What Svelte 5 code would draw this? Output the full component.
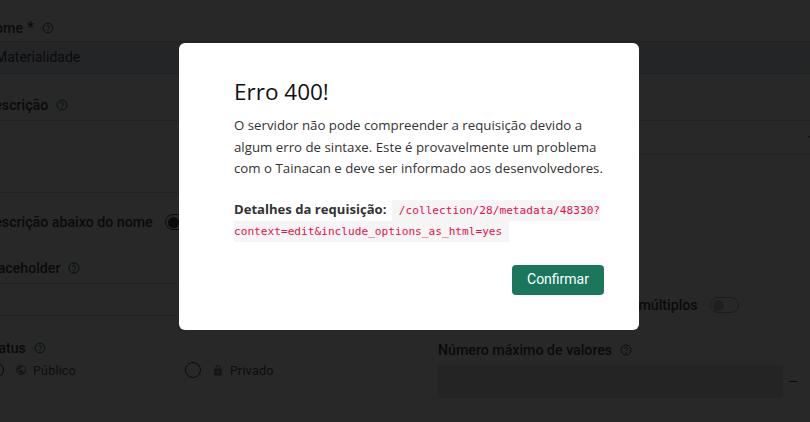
<script lang="ts">
	const statusOptions = [
		{ label: 'Público', icon: 'globe' },
		{ label: 'Privado', icon: 'lock' }
	];
</script>

{#snippet help()}
	<svg class="help" viewBox="0 0 24 24" width="12" height="12" aria-hidden="true">
		<circle cx="12" cy="12" r="10" fill="none" stroke="currentColor" stroke-width="2" />
		<path d="M9 9.500a3 3 0 1 1 4.600 2.500c-1 .7-1.600 1.300-1.600 2.500" fill="none" stroke="currentColor" stroke-width="2" />
		<circle cx="12" cy="17.500" r="1.300" fill="currentColor" />
	</svg>
{/snippet}

<div class="page">
	<form class="form">
		<div class="field name">
			<div class="label">Nome <span class="star">*</span> {@render help()}</div>
			<div class="input filled">Materialidade</div>
		</div>

		<div class="columns">
			<div class="col left">
				<div class="field">
					<div class="label">Descrição {@render help()}</div>
					<div class="textarea"></div>
				</div>
				<div class="switch-row">
					<span class="label">Descrição abaixo do nome</span>
					<span class="switch on"><span class="knob"></span></span>
				</div>
				<div class="field placeholder">
					<div class="label">Placeholder {@render help()}</div>
					<div class="input"></div>
				</div>
				<div class="field status">
					<div class="label">Status {@render help()}</div>
					<div class="radios">
						{#each statusOptions as s}
							<div class="radio-item">
								<span class="radio"></span>
								{#if s.icon === 'globe'}
									<svg class="ico" viewBox="0 0 24 24" width="12" height="12"><path fill="currentColor" d="M12 2a10 10 0 1 0 0 20 10 10 0 0 0 0-20Zm-1 17.900A8 8 0 0 1 4.200 10L9 15v1c0 1.100.9 2 2 2v1.900Zm6.900-2.500A2 2 0 0 0 16 16h-1v-3a1 1 0 0 0-1-1H8v-2h2a1 1 0 0 0 1-1V7h2a2 2 0 0 0 2-2v-.4a8 8 0 0 1 2.900 12.800Z" /></svg>
								{:else}
									<svg class="ico" viewBox="0 0 24 24" width="12" height="13"><path fill="currentColor" d="M18 8h-1V6A5 5 0 0 0 7 6v2H6a2 2 0 0 0-2 2v10c0 1.100.9 2 2 2h12a2 2 0 0 0 2-2V10a2 2 0 0 0-2-2Zm-6 9a2 2 0 1 1 0-4 2 2 0 0 1 0 4Zm3.100-9H8.900V6a3.100 3.100 0 0 1 6.200 0v2Z" /></svg>
								{/if}
								<span>{s.label}</span>
							</div>
						{/each}
					</div>
				</div>
			</div>

			<div class="col right">
				<div class="select">
					<span class="arrow"></span>
				</div>
				<div class="switch-row multi">
					<span class="label">Valores múltiplos</span>
					<span class="switch"><span class="knob"></span></span>
				</div>
				<div class="field max">
					<div class="label">Número máximo de valores {@render help()}</div>
					<div class="number">
						<div class="input grey"></div>
						<span class="minus">—</span>
					</div>
				</div>
			</div>
		</div>
	</form>

	<div class="overlay">
		<div class="dialog" role="alertdialog">
			<h1>Erro 400!</h1>
			<p>O servidor não pode compreender a requisição devido a algum erro de sintaxe. Este é provavelmente um problema com o Tainacan e deve ser informado aos desenvolvedores.</p>
			<div class="details">
				<strong>Detalhes da requisição:</strong>
				<code>/collection/28/metadata/48330?<wbr />context=edit&amp;include_options_as_html=yes</code>
			</div>
			<div class="actions">
				<button type="button">Confirmar</button>
			</div>
		</div>
	</div>
</div>

<style>
	:global(body) {
		margin: 0;
		background: #fff;
		overflow: hidden;
	}
	.page {
		position: relative;
		width: 810px;
		height: 422px;
		overflow: hidden;
		font-family: Roboto, sans-serif;
		color: #454545;
	}
	.form {
		margin-left: -15px;
		padding-top: 19px;
		width: 845px;
	}
	.label {
		display: flex;
		align-items: center;
		gap: 6px;
		font-size: 14.2px;
		line-height: 18px;
		font-weight: 500;
		color: #454545;
		height: 18px;
	}
	.star {
		font-size: 16px;
		font-weight: 400;
		margin-left: -2px;
	}
	.help {
		color: #186070;
		margin-left: 2px;
	}
	.field .label {
		margin-bottom: 6px;
	}
	.name .label {
		margin-bottom: 4px;
	}
	.input {
		height: 31px;
		border-top: 1px solid #dbdada;
		border-bottom: 1px solid #dbdada;
		font-size: 14px;
		line-height: 31px;
		padding-left: 10px;
	}
	.filled {
		background: #e3ebf5;
	}
	.grey {
		background: #e5e5e5;
		border: 0;
		height: 33px;
	}
	.columns {
		display: grid;
		grid-template-columns: 422px 1fr;
		margin-top: 22px;
	}
	.col.left {
		border-right: 1px solid #f0f0f0;
		box-sizing: border-box;
	}
	.textarea {
		height: 71px;
		border-top: 1px solid #dbdada;
		border-bottom: 1px solid #dbdada;
	}
	.switch-row {
		display: flex;
		align-items: center;
		gap: 12px;
	}
	.left .switch-row {
		margin-top: 18px;
		height: 22px;
	}
	.switch {
		width: 29px;
		height: 16px;
		border: 1px solid #aaa;
		border-radius: 9px;
		display: flex;
		align-items: center;
		padding: 0 2px;
		box-sizing: border-box;
	}
	.switch.on {
		border-color: #454545;
	}
	.switch .knob {
		width: 11px;
		height: 11px;
		border-radius: 50%;
		background: #c4c4c4;
	}
	.switch.on .knob {
		background: #454545;
	}
	.placeholder {
		margin-top: 26px;
	}
	.status {
		margin-top: 23px;
		padding-bottom: 30px;
	}
	.status .label {
		margin-bottom: 5px;
	}
	.radios {
		display: grid;
		grid-template-columns: 197px 1fr;
		font-size: 12.5px;
		letter-spacing: 0.2px;
		color: #555;
		padding-left: 3px;
	}
	.radio-item {
		display: flex;
		align-items: center;
		gap: 6px;
		height: 16px;
	}
	.radio {
		width: 14px;
		height: 14px;
		border: 1px solid #454545;
		border-radius: 50%;
		margin-right: 5px;
	}
	.ico {
		color: #888;
	}
	.right {
		padding-left: 31px;
		padding-top: 24px;
	}
	.select {
		position: relative;
		height: 33px;
		border-top: 1px solid #dbdada;
		border-bottom: 1px solid #dbdada;
	}
	.arrow {
		position: absolute;
		right: 14px;
		top: 15px;
		border-left: 4px solid transparent;
		border-right: 4px solid transparent;
		border-top: 5px solid #186070;
	}
	.multi {
		margin-top: 140px;
		margin-left: 149px;
		height: 20px;
	}
	.max {
		margin-top: 26px;
	}
	.number {
		display: flex;
		align-items: center;
		gap: 5px;
	}
	.number .grey {
		width: 345px;
		padding: 0;
	}
	.minus {
		color: #186070;
		font-size: 13px;
	}
	.overlay {
		position: absolute;
		inset: 0;
		background: rgba(0, 0, 0, 0.845);
		display: flex;
		align-items: flex-start;
		justify-content: center;
		padding: 43px 0 0 8px;
		box-sizing: border-box;
	}
	.dialog {
		width: 460px;
		height: 287px;
		box-sizing: border-box;
		background: #fff;
		border-radius: 6px;
		padding: 34px 35px 0 55px;
		font-family: "Open Sans", sans-serif;
		color: #333;
	}
	h1 {
		margin: 0 0 8px;
		font-size: 22.5px;
		line-height: 30px;
		font-weight: 400;
		color: #111;
	}
	p {
		margin: 0;
		font-size: 13.28px;
		line-height: 21.5px;
	}
	.details {
		margin-top: 19px;
		font-size: 13.1px;
		line-height: 21px;
	}
	.details strong {
		font-weight: 700;
		margin-right: 2px;
	}
	code {
		font-family: "DejaVu Sans Mono", monospace;
		font-size: 11.15px;
		line-height: 1;
		color: #e6104f;
		background: #f5f5f5;
		padding: 4px 7px;
	}
	.actions {
		display: flex;
		justify-content: flex-end;
		margin-top: 24px;
	}
	button {
		width: 92px;
		height: 30px;
		border: 0;
		border-radius: 4px;
		background: #1a775c;
		color: #fff;
		font-family: Roboto, sans-serif;
		font-size: 14px;
		padding: 0 0 2px;
	}
</style>
